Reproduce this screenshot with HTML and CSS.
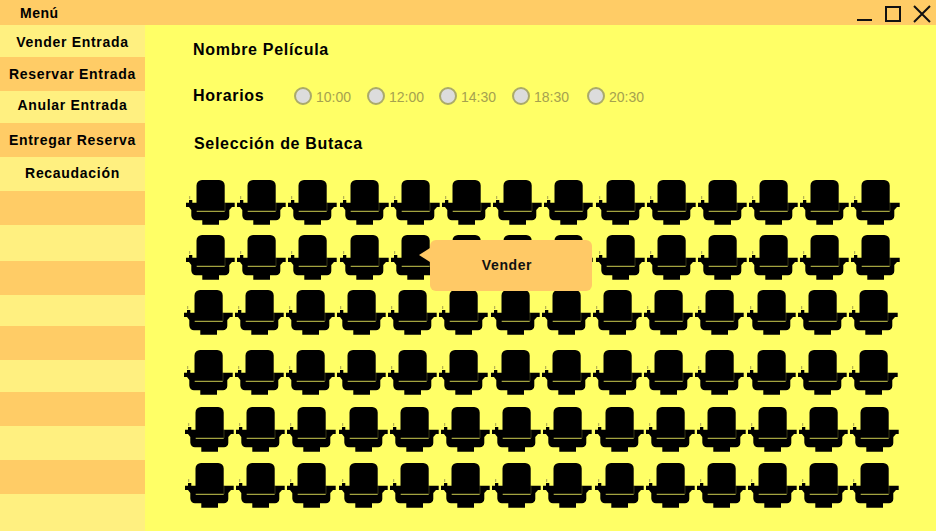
FILE: index.html
```html
<!DOCTYPE html>
<html lang="es">
<head>
<meta charset="utf-8">
<title>Venta de entradas</title>
<link rel="stylesheet" href="styles.css">
</head>
<body>
<svg class="defs" width="0" height="0" aria-hidden="true">
  <symbol id="seat" viewBox="0 0 49 45">
    <path class="tick" d="M3.7 16v3"/>
    <path d="M10.500 5.500a5.500 5.500 0 0 1 5.500-5.500h17.200a5.500 5.500 0 0 1 5.500 5.500V22.700H48.700V27H46L43.300 30V36a4.300 4.300 0 0 1-4.300 4.300H33V44.700H16.300V40.300H10a4.700 4.700 0 0 1-4.700-4.700V30L3 27H0V22.700H3V20H6.300V22.700H10.500z"/>
    <path class="line" d="M10.700 31.300H38.700"/>
    <path class="seam" d="M39 22.700V31"/>
  </symbol>
</svg>
<div class="app">
  <header class="titlebar">
    <span class="menu-title">Menú</span>
    <div class="window-controls">
      <svg class="win-min" width="16" height="16" viewBox="0 0 16 16"><path d="M0 15h15"/></svg>
      <svg class="win-max" width="16" height="17" viewBox="0 0 16 17"><path d="M1 2h14v14H1z"/></svg>
      <svg class="win-close" width="18" height="18" viewBox="0 0 18 18"><path d="M1 1l16 16M17 1L1 17"/></svg>
    </div>
  </header>
  <div class="body">
    <aside class="sidebar">
      <a class="item drop">Vender Entrada</a>
      <a class="item alt">Reservar Entrada</a>
      <a class="item lift2">Anular Entrada</a>
      <a class="item alt">Entregar Reserva</a>
      <a class="item lift">Recaudación</a>
      <span class="item alt"></span>
      <span class="item"></span>
      <span class="item alt"></span>
      <span class="item"></span>
      <span class="item alt"></span>
      <span class="item"></span>
      <span class="item alt"></span>
      <span class="item"></span>
      <span class="item alt"></span>
      <span class="item"></span>
    </aside>
    <main class="content">
      <h1 class="heading movie">Nombre Película</h1>
      <div class="times">
        <h2 class="heading times-label">Horarios</h2>
        <label class="time t1"><i class="radio"></i>10:00</label>
        <label class="time t2"><i class="radio"></i>12:00</label>
        <label class="time t3"><i class="radio"></i>14:30</label>
        <label class="time t4"><i class="radio"></i>18:30</label>
        <label class="time t5"><i class="radio"></i>20:30</label>
      </div>
      <h2 class="heading seats-title">Selección de Butaca</h2>
      <div class="hall" id="hall">
        <div class="row r1"></div>
        <div class="row r2"></div>
        <div class="row r3"></div>
        <div class="row r4"></div>
        <div class="row r5"></div>
        <div class="row r6"></div>
      </div>
      <div class="popup">Vender</div>
    </main>
  </div>
</div>
<script src="seats.js"></script>
</body>
</html>
```
FILE: seats.js
```js
document.querySelectorAll('.row').forEach(function (row) {
  var html = '';
  for (var i = 0; i < 14; i++) {
    html += '<svg class="seat" width="49" height="45"><use href="#seat"/></svg>';
  }
  row.innerHTML = html;
});
```
FILE: styles.css
```css
* { box-sizing: border-box; }
html, body { margin: 0; padding: 0; height: 100%; }
body {
  font-family: "Liberation Sans", Arial, sans-serif;
  background: #ffff66;
  color: #000;
  overflow: hidden;
}
.defs { position: absolute; }
.app { display: flex; flex-direction: column; height: 531px; }

.titlebar {
  height: 25px;
  flex: none;
  background: #ffcc66;
  display: flex;
  align-items: center;
  justify-content: space-between;
  padding: 1px 5px 0 20px;
}
.menu-title { font-size: 14px; font-weight: 700; letter-spacing: 0.5px; }
.window-controls { display: flex; align-items: flex-start; gap: 12px; height: 25px; padding-top: 4px; }
.window-controls svg { display: block; fill: none; stroke: #111; stroke-width: 2; }
.win-close { stroke-width: 1.7; }

.body { flex: 1; display: flex; min-height: 0; }

.sidebar {
  width: 145px;
  flex: none;
  display: grid;
  grid-template-rows: 32px 34px 32px 34px 34px 34px 36px 34px 31px 34px 32px 34px 34px 34px 37px;
}
.item {
  display: flex;
  align-items: center;
  justify-content: center;
  background: #fff080;
  font-size: 14px;
  font-weight: 700;
  letter-spacing: 0.7px;
  white-space: nowrap;
}
.item.alt { background: #ffcc66; }
.item.drop { padding-top: 2px; }
.item.lift { padding-bottom: 2px; }
.item.lift2 { padding-bottom: 4px; }

.content { flex: 1; position: relative; padding: 16px 0 0 48px; min-width: 0; }
.heading { margin: 0; font-size: 16px; font-weight: 700; letter-spacing: 0.7px; line-height: 18px; }
.times { display: flex; align-items: center; margin-top: 29px; height: 18px; }
.times-label { width: 101px; margin-bottom: 2px; }
.time {
  display: flex;
  align-items: center;
  gap: 4px;
  font-size: 14px;
  color: #a5a14f;
  line-height: 18px;
  width: 73px;
  flex: none;
}
.t2 { width: 72px; }
.t4 { width: 75px; }
.radio {
  width: 18px;
  height: 18px;
  margin-bottom: 2px;
  border-radius: 50%;
  background: #dcdcdc;
  border: 2px solid #aaaa6a;
  flex: none;
}
.seats-title { margin: 29px 0 0 1px; }

.hall { margin: 27px 0 0 -7px; display: flex; flex-direction: column; }
.row { display: flex; gap: 2.2px; height: 45px; }
.r2, .r3 { margin-top: 10px; }
.r3, .r4 { margin-left: -2.500px; }
.r4 { margin-top: 15px; }
.r5 { margin-top: 12px; margin-left: -1px; }
.r6 { margin-top: 11px; margin-left: -1px; }
.seat { display: block; flex: none; fill: #000; overflow: visible; }
symbol .tick { stroke: #a5a14f; stroke-width: 1; fill: none; }
symbol .line { stroke: #ffff66; stroke-width: 0.8; fill: none; }
symbol .seam { stroke: #6b6b2a; stroke-width: 0.5; fill: none; }

.popup {
  position: absolute;
  left: 285px;
  top: 215px;
  width: 162px;
  height: 51px;
  padding: 0 8px 2px 0;
  background: #ffc966;
  border-radius: 6px;
  display: flex;
  align-items: center;
  justify-content: center;
  font-size: 14px;
  font-weight: 700;
  letter-spacing: 0.6px;
  color: #111;
}
.popup::before {
  content: "";
  position: absolute;
  left: -11px;
  top: 8px;
  border-style: solid;
  border-width: 7.500px 11px 7.500px 0;
  border-color: transparent #ffc966 transparent transparent;
}
```
